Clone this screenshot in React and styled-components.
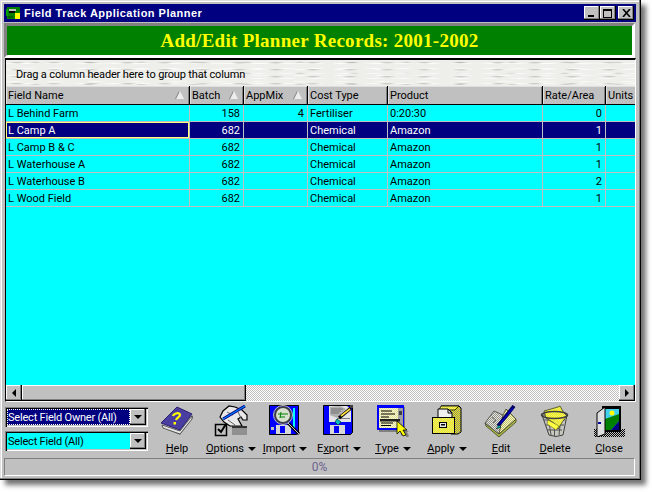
import React from 'react'
import styled, { createGlobalStyle, css } from 'styled-components'

const GlobalStyle = createGlobalStyle`
  html, body {
    margin: 0;
    padding: 0;
    background: #fff;
  }
  body {
    font-family: Roboto, "Liberation Sans", Arial, sans-serif;
    font-size: 11px;
    color: #000;
  }
`

const Page = styled.div`
  width: 652px;
  height: 492px;
  overflow: hidden;
`

const Window = styled.div`
  width: 641px;
  height: 480px;
  box-sizing: border-box;
  padding: 4px 5px 4px 4px;
  display: flex;
  flex-direction: column;
  background: #c0c0c0;
  box-shadow: inset -1px -1px 0 #000, inset -2px -2px 0 #808080, inset 1px 1px 0 #dfdfdf,
    inset 2px 2px 0 #fff, 5px 5px 5px rgba(0, 0, 0, 0.55);
`

const TitleBar = styled.div`
  height: 18px;
  flex: none;
  display: flex;
  align-items: center;
  padding: 0 2px;
  gap: 3px;
  background: #000080;
  color: #fff;
`

const TitleText = styled.span`
  font-family: "Liberation Sans", Arial, sans-serif;
  font-weight: bold;
  font-size: 11px;
  letter-spacing: 0.48px;
  flex: 1;
`

const WinButtons = styled.div`
  display: flex;
  align-items: center;
`

const WinButton = styled.div`
  width: 16px;
  height: 14px;
  box-sizing: border-box;
  margin-left: ${(p) => (p.$gap ? '2px' : '0')};
  background: #c0c0c0;
  box-shadow: inset -1px -1px 0 #000, inset -2px -2px 0 #808080, inset 1px 1px 0 #fff;
  display: flex;
  align-items: center;
  justify-content: center;
`

const Banner = styled.div`
  height: 35px;
  flex: none;
  box-sizing: border-box;
  margin-top: 1px;
  margin-right: 1px;
  border: 3px solid;
  border-color: #808080 #fff #fff #808080;
  background: #008000;
  color: #ffff00;
  font-family: "Liberation Serif", "Times New Roman", serif;
  font-weight: bold;
  font-size: 19px;
  letter-spacing: 0.28px;
  display: flex;
  align-items: center;
  justify-content: center;
`

const Grid = styled.div`
  flex: 1;
  min-height: 0;
  display: flex;
  flex-direction: column;
  box-sizing: border-box;
  border-top: 2px solid #000;
  border-left: 1px solid #000;
  border-right: 1px solid #fff;
  border-bottom: 1px solid #fff;
  margin-left: 1px;
`

const GroupPanel = styled.div`
  height: 26px;
  flex: none;
  padding: 2px 0 0 10px;
  box-sizing: border-box;
  display: flex;
  align-items: center;
  letter-spacing: -0.15px;
  background-color: #eeeeea;
  background-image: radial-gradient(ellipse 9px 0.9px at 30% 40%, rgba(140, 140, 135, 0.55), transparent),
    radial-gradient(ellipse 12px 0.9px at 70% 70%, rgba(255, 255, 255, 0.8), transparent),
    radial-gradient(ellipse 7px 0.8px at 55% 20%, rgba(150, 150, 145, 0.5), transparent),
    radial-gradient(ellipse 14px 1px at 15% 60%, rgba(255, 255, 255, 0.7), transparent);
  background-size: 37px 7px, 29px 5px, 53px 11px, 41px 6px;
`

const columns = '184px 54px 64px 80px 155px 63px 1fr'

const HeaderRow = styled.div`
  display: grid;
  grid-template-columns: ${columns};
  height: 18px;
  flex: none;
  border-bottom: 1px solid #000;
  background: #c0c0c0;
`

const HeaderCell = styled.div`
  display: flex;
  align-items: center;
  justify-content: space-between;
  box-sizing: border-box;
  padding: 0 4px 0 2px;
  border-right: 1px solid #000;
  box-shadow: inset 1px 1px 0 #dfdfdf, inset -1px 0 0 #808080;
  white-space: nowrap;
  overflow: hidden;
  &:last-child {
    border-right: 0;
    box-shadow: inset 1px 1px 0 #dfdfdf;
  }
`

const SortArrow = styled.span`
  width: 0;
  height: 0;
  margin-right: 1px;
  border-left: 4px solid transparent;
  border-right: 4px solid transparent;
  border-bottom: 8px solid #ececec;
  filter: drop-shadow(-1px 0 0 #808080);
`

const Body = styled.div`
  flex: 1;
  min-height: 0;
  background: #00ffff;
  overflow: hidden;
`

const Row = styled.div`
  display: grid;
  grid-template-columns: ${columns};
  height: 17px;
  box-sizing: border-box;
  border-bottom: 1px solid #c0c0c0;
  ${(p) =>
    p.$selected &&
    css`
      background: #000080;
      color: #fff;
    `}
`

const Cell = styled.div`
  box-sizing: border-box;
  padding: 1px 3px 0 2px;
  line-height: 15px;
  white-space: nowrap;
  overflow: hidden;
  text-align: ${(p) => (p.$num ? 'right' : 'left')};
  border-right: 1px solid #c0c0c0;
  ${(p) =>
    p.$focus &&
    css`
      box-shadow: inset 0 0 0 1px #ffff80;
    `}
  &:last-child {
    border-right: 0;
  }
`

const ScrollBar = styled.div`
  height: 16px;
  flex: none;
  display: flex;
  background-color: #fff;
  background-image: conic-gradient(#c0c0c0 25%, #fff 0 50%, #c0c0c0 0 75%, #fff 0);
  background-size: 2px 2px;
`

const ScrollButton = styled.div`
  width: ${(p) => p.$w || '16px'};
  flex: none;
  box-sizing: border-box;
  background: #c0c0c0;
  box-shadow: inset -1px -1px 0 #000, inset -2px -2px 0 #808080, inset 1px 1px 0 #fff;
  display: flex;
  align-items: center;
  justify-content: center;
`

const ScrollGap = styled.div`
  flex: 1;
`

const Arrow = styled.span`
  width: 0;
  height: 0;
  border-top: 4px solid transparent;
  border-bottom: 4px solid transparent;
  ${(p) =>
    p.$dir === 'left'
      ? 'border-right: 4px solid #000;'
      : 'border-left: 4px solid #000;'}
`

const BottomBar = styled.div`
  height: 56px;
  flex: none;
  display: flex;
`

const Combos = styled.div`
  width: 146px;
  flex: none;
  padding: 5px 0 0 1px;
  box-sizing: border-box;
  display: flex;
  flex-direction: column;
  gap: 4px;
`

const Combo = styled.div`
  height: 20px;
  width: 143px;
  box-sizing: border-box;
  padding: 2px;
  display: flex;
  box-shadow: inset 1px 1px 0 #808080, inset 2px 2px 0 #000, inset -1px -1px 0 #fff, inset -2px -2px 0 #c0c0c0;
`

const ComboField = styled.div`
  flex: 1;
  min-width: 0;
  line-height: 17px;
  padding-left: 1px;
  white-space: nowrap;
  overflow: hidden;
  letter-spacing: -0.2px;
  background: ${(p) => (p.$active ? '#000080' : '#00ffff')};
  color: ${(p) => (p.$active ? '#fff' : '#000')};
  ${(p) =>
    p.$active &&
    css`
      outline: 1px dotted #fff;
      outline-offset: -1px;
    `}
`

const ComboButton = styled.div`
  width: 16px;
  flex: none;
  background: #c0c0c0;
  box-shadow: inset -1px -1px 0 #000, inset -2px -2px 0 #808080, inset 1px 1px 0 #fff;
  display: flex;
  align-items: center;
  justify-content: center;
`

const DownArrow = styled.span`
  width: 0;
  height: 0;
  margin-left: ${(p) => p.$ml || '0'};
  border-left: 4px solid transparent;
  border-right: 4px solid transparent;
  border-top: 4px solid #000;
`

const Toolbar = styled.div`
  display: flex;
  padding-top: 3px;
`

const Tool = styled.div`
  width: 54px;
  flex: none;
  display: flex;
  flex-direction: column;
  align-items: center;
`

const ToolLabel = styled.div`
  margin-top: 5px;
  line-height: 14px;
  font-size: 11px;
  white-space: nowrap;
  display: flex;
  align-items: center;
  u {
    text-underline-offset: 1px;
  }
`

const StatusBar = styled.div`
  height: 18px;
  flex: none;
  margin-right: 1px;
  box-sizing: border-box;
  border: 1px solid;
  border-color: #808080 #fff #fff #808080;
  display: flex;
  align-items: center;
  justify-content: center;
  color: #6b6390;
  font-size: 12px;
`

const AppIcon = () => (
  <svg width="15" height="14" viewBox="0 0 15 14" shapeRendering="crispEdges">
    <rect x="1" y="1" width="13" height="12" fill="#008000" />
    <rect x="0" y="3" width="2" height="7" fill="#00a000" />
    <rect x="3" y="3" width="7" height="2" fill="#c0c0c0" />
    <rect x="3" y="5" width="6" height="2" fill="#000" />
    <rect x="9" y="7" width="5" height="6" fill="#ffff00" />
    <rect x="2" y="10" width="5" height="2" fill="#006000" />
  </svg>
)

const Dither = ({ id, a, b }) => (
  <pattern id={id} width="2" height="2" patternUnits="userSpaceOnUse">
    <rect width="2" height="2" fill={a} />
    <rect width="1" height="1" fill={b} />
    <rect x="1" y="1" width="1" height="1" fill={b} />
  </pattern>
)

const Icon = ({ children }) => (
  <svg width="36" height="32" viewBox="0 0 36 32">
    {children}
  </svg>
)

const HelpIcon = () => (
  <Icon>
    <path d="M4 23l17 7 13-17v-3L21 27 3 20z" fill="#808080" />
    <path d="M3 20l18 6 12-15v3L21 29 4 23z" fill="#e8e8e8" stroke="#404040" strokeWidth="0.8" />
    <path d="M2 18L18 2l15 7-12 16z" fill="#4a3fa0" stroke="#2a2070" strokeWidth="1" />
    <path d="M14 11c1-3 7-4 7-1 0 2-3 2-4 5" fill="none" stroke="#ffff00" strokeWidth="2.2" />
    <rect x="14.5" y="17" width="2.5" height="2.5" fill="#ffff00" />
  </Icon>
)

const OptionsIcon = () => (
  <Icon>
    <path d="M19 22h15v8H19z" fill="#909090" />
    <path d="M7 12l3-6 6-5 6 1 7 3 5 5v5h-4l-2-3-3 2 4 7H17l-6-4z" fill="#e8e8e8" stroke="#000" strokeWidth="1.200" />
    <path d="M14 7l6 3M15 15l7 5M25 7l3 6" stroke="#606060" strokeWidth="1" fill="none" />
    <path d="M10 14L32 1" stroke="#000080" strokeWidth="3" />
    <path d="M10 14L32 1" stroke="#0080ff" strokeWidth="1.2" />
    <rect x="2.500" y="19.500" width="11" height="11" fill="#c0c0c0" stroke="#000" strokeWidth="1.5" />
    <path d="M5 24l3 3 5-8" fill="none" stroke="#000" strokeWidth="2" />
    <rect x="19" y="21" width="15" height="2" fill="#303030" />
  </Icon>
)

const Floppy = ({ children }) => (
  <>
    <path d="M2.500 0.500h29v27l-2 2h-27z" fill="#0000ff" stroke="#000" strokeWidth="1" />
    <rect x="9" y="20" width="15" height="9" fill="#d8d8d8" />
    <rect x="13" y="21" width="5" height="7" fill="#0000ff" />
    {children}
  </>
)

const ImportIcon = () => (
  <Icon>
    <Floppy>
      <rect x="4" y="22" width="3" height="3" fill="#c0c0c0" />
      <rect x="26" y="3" width="2" height="20" fill="#00ffff" />
      <path d="M21 18l11 11" stroke="#000" strokeWidth="3" />
      <path d="M21 18l11 11" stroke="#c0c0c0" strokeWidth="1" />
      <circle cx="16" cy="10" r="8" fill="#d8e0d0" stroke="#404040" strokeWidth="2" />
      <circle cx="16" cy="10" r="9.500" fill="none" stroke="#c0c0c0" strokeWidth="1" />
      <path d="M11 9h10M13 12h5M14 7l-1 6" stroke="#008000" strokeWidth="1" fill="none" />
    </Floppy>
  </Icon>
)

const ExportIcon = () => (
  <Icon>
    <Floppy>
      <path d="M8 1h18l4 3v13H8z" fill="#e4e4e4" />
      <path d="M9 2l10-1 6 3-9 9-7-3z" fill="#b0b0b0" />
      <path d="M10 4h12M10 6h10M10 8h8" stroke="#707070" strokeWidth="1" />
      <rect x="16" y="13" width="13" height="1" fill="#808080" />
      <path d="M16 14l4 3-3 3-3-3z" fill="#00c0c0" stroke="#004040" strokeWidth="0.8" />
      <path d="M18 13l12-10" stroke="#000" strokeWidth="3.400" />
      <path d="M20 11l9-7" stroke="#ffe040" strokeWidth="1.600" />
      <rect x="29" y="0" width="3" height="3" fill="#404040" />
    </Floppy>
  </Icon>
)

const TypeIcon = () => (
  <Icon>
    <defs>
      <Dither id="typeDither" a="#ffffc0" b="#d8d8a8" />
    </defs>
    <rect x="4" y="2" width="26" height="25" fill="#808080" />
    <rect x="2" y="0" width="27" height="25" fill="#0000ff" />
    <rect x="4" y="3" width="19" height="20" fill="url(#typeDither)" />
    <rect x="23" y="3" width="5" height="20" fill="#a0a0a0" />
    <rect x="24" y="6" width="3" height="4" fill="#404040" />
    <path d="M6 6h11M6 9h14M6 12h8M6 18h12M6 20.500h10" stroke="#000" strokeWidth="1" />
    <rect x="5" y="14" width="20" height="2.500" fill="#202020" />
    <path d="M25 20l9 7h-2l2 4-2 2-3-5-3 3z" fill="#404040" opacity="0.5" />
    <path d="M22 16l10 9-4 0 3 5-3 1-3-5-3 3z" fill="#ffff00" stroke="#000" strokeWidth="0.8" />
  </Icon>
)

const ApplyIcon = () => (
  <Icon>
    <defs>
      <Dither id="applyFront" a="#ffff00" b="#d8d890" />
      <Dither id="applySide" a="#ffff00" b="#808080" />
    </defs>
    <path d="M12 1h18l2 2v24l-3 2H22V13z" fill="url(#applySide)" stroke="#000" strokeWidth="1" />
    <path d="M12 1l-2 4h16l4-4z" fill="url(#applyFront)" stroke="#000" strokeWidth="0.8" />
    <path d="M9 4h10l4 4v10H9z" fill="#f0f0f0" stroke="#000" strokeWidth="1" />
    <path d="M19 4v4h4" fill="none" stroke="#000" strokeWidth="1" />
    <rect x="3.500" y="12.500" width="22" height="16" fill="url(#applyFront)" stroke="#000" strokeWidth="1" />
    <rect x="10.500" y="17.500" width="7" height="5" fill="#e8e8e8" stroke="#000" strokeWidth="1" />
    <rect x="12" y="19" width="4" height="1.500" fill="#000" />
  </Icon>
)

const EditIcon = () => (
  <Icon>
    <defs>
      <Dither id="editLeft" a="#e8e8e0" b="#909088" />
      <Dither id="editRight" a="#ffffb0" b="#b8b880" />
    </defs>
    <path d="M2 18l14 11 17-15v3L16 32 3 21z" fill="#a8b848" stroke="#404020" strokeWidth="0.8" />
    <path d="M2 18L11 6l9 4 3 12-7 7z" fill="url(#editLeft)" stroke="#404040" strokeWidth="0.8" />
    <path d="M20 10l3-6 10 10-17 15z" fill="url(#editRight)" stroke="#404020" strokeWidth="0.8" />
    <path d="M9 12l4 3-3 3" fill="none" stroke="#707070" strokeWidth="1" />
    <path d="M15 21L31 1" stroke="#000060" strokeWidth="3.600" />
    <path d="M17 19L30 3" stroke="#0000c0" strokeWidth="1.400" />
    <path d="M13 24l3-4 2 2z" fill="#00c0c0" stroke="#000" strokeWidth="0.5" />
  </Icon>
)

const DeleteIcon = () => (
  <Icon>
    <defs>
      <Dither id="delPaper" a="#ffff00" b="#e0e080" />
    </defs>
    <path d="M5 10h25l-4 20q-7 3-14 0z" fill="#c8c8c0" stroke="#404040" strokeWidth="1" />
    <path d="M7 15h21M9 20h18M10 25h15M11 11l3 19M17.500 11v20M24 11l-2 19" stroke="#505050" strokeWidth="1" fill="none" />
    <path d="M7 6l14-4 2-1 4 7 3 3-4 5-5 8-4-6-8-5z" fill="url(#delPaper)" stroke="#404020" strokeWidth="0.8" />
    <path d="M11 15l11 6-3 4-9-6z" fill="#ffff40" stroke="#606030" strokeWidth="0.6" />
    <ellipse cx="17.500" cy="10" rx="13" ry="3.500" fill="none" stroke="#404040" strokeWidth="1.500" />
  </Icon>
)

const CloseIcon = () => (
  <Icon>
    <defs>
      <Dither id="floor" a="#000" b="#c0c0c0" />
    </defs>
    <rect x="3" y="24" width="31" height="8" fill="url(#floor)" />
    <rect x="11.500" y="1.500" width="18" height="25" fill="#000" stroke="#000" />
    <rect x="14" y="4" width="14" height="21" fill="#40d0f0" />
    <circle cx="21" cy="8" r="2.500" fill="#ffff00" />
    <path d="M14 14l14-5v7l-8 9h-6z" fill="#008000" />
    <path d="M20 25l8-9v9z" fill="#000080" />
    <path d="M6 8l8-6v27l-8 3z" fill="#e0e0e0" stroke="#000" strokeWidth="1" />
    <rect x="7" y="17" width="3" height="2" fill="#0000a0" />
  </Icon>
)

const columnsData = [
  { name: 'Field Name', sort: true },
  { name: 'Batch', sort: true },
  { name: 'AppMix', sort: true },
  { name: 'Cost Type' },
  { name: 'Product' },
  { name: 'Rate/Area' },
  { name: 'Units' },
]

const rows = [
  ['L Behind Farm', '158', '4', 'Fertiliser', '0:20:30', '0'],
  ['L Camp A', '682', '', 'Chemical', 'Amazon', '1'],
  ['L Camp B & C', '682', '', 'Chemical', 'Amazon', '1'],
  ['L Waterhouse A', '682', '', 'Chemical', 'Amazon', '1'],
  ['L Waterhouse B', '682', '', 'Chemical', 'Amazon', '2'],
  ['L Wood Field', '682', '', 'Chemical', 'Amazon', '1'],
]

const tools = [
  { icon: HelpIcon, key: 'H', rest: 'elp' },
  { icon: OptionsIcon, key: 'O', rest: 'ptions', menu: true },
  { icon: ImportIcon, key: 'I', rest: 'mport', menu: true },
  { icon: ExportIcon, pre: 'E', key: 'x', rest: 'port', menu: true },
  { icon: TypeIcon, key: 'T', rest: 'ype', menu: true },
  { icon: ApplyIcon, key: 'A', rest: 'pply', menu: true },
  { icon: EditIcon, key: 'E', rest: 'dit' },
  { icon: DeleteIcon, key: 'D', rest: 'elete' },
  { icon: CloseIcon, key: 'C', rest: 'lose' },
]

export default function App() {
  return (
    <Page>
      <GlobalStyle />
      <Window>
        <TitleBar>
          <AppIcon />
          <TitleText>Field Track Application Planner</TitleText>
          <WinButtons>
            <WinButton>
              <svg width="8" height="8" viewBox="0 0 8 8" shapeRendering="crispEdges">
                <rect x="0" y="6" width="6" height="2" fill="#000" />
              </svg>
            </WinButton>
            <WinButton>
              <svg width="10" height="9" viewBox="0 0 10 9" shapeRendering="crispEdges">
                <path d="M0.500 1.500h8v7h-8z" fill="none" stroke="#000" />
                <rect x="0" y="0" width="9" height="2" fill="#000" />
              </svg>
            </WinButton>
            <WinButton $gap>
              <svg width="9" height="8" viewBox="0 0 9 8">
                <path d="M1 0l7 8M8 0l-7 8" stroke="#000" strokeWidth="1.600" />
              </svg>
            </WinButton>
          </WinButtons>
        </TitleBar>
        <Banner>Add/Edit Planner Records: 2001-2002</Banner>
        <Grid>
          <GroupPanel>Drag a column header here to group that column</GroupPanel>
          <HeaderRow>
            {columnsData.map((col) => (
              <HeaderCell key={col.name}>
                {col.name}
                {col.sort && <SortArrow />}
              </HeaderCell>
            ))}
          </HeaderRow>
          <Body>
            {rows.map((row, i) => (
              <Row key={row[0]} $selected={i === 1}>
                <Cell $focus={i === 1}>{row[0]}</Cell>
                <Cell $num>{row[1]}</Cell>
                <Cell $num>{row[2]}</Cell>
                <Cell>{row[3]}</Cell>
                <Cell>{row[4]}</Cell>
                <Cell $num>{row[5]}</Cell>
                <Cell />
              </Row>
            ))}
          </Body>
          <ScrollBar>
            <ScrollButton>
              <Arrow $dir="left" />
            </ScrollButton>
            <ScrollButton $w="224px" />
            <ScrollGap />
            <ScrollButton>
              <Arrow $dir="right" />
            </ScrollButton>
          </ScrollBar>
        </Grid>
        <BottomBar>
          <Combos>
            <Combo>
              <ComboField $active>Select Field Owner (All)</ComboField>
              <ComboButton>
                <DownArrow />
              </ComboButton>
            </Combo>
            <Combo>
              <ComboField>Select Field (All)</ComboField>
              <ComboButton>
                <DownArrow />
              </ComboButton>
            </Combo>
          </Combos>
          <Toolbar>
            {tools.map((tool) => {
              const ToolIcon = tool.icon
              return (
                <Tool key={tool.pre ? tool.pre + tool.key : tool.key + tool.rest}>
                  <ToolIcon />
                  <ToolLabel>
                    {tool.pre}
                    <u>{tool.key}</u>
                    {tool.rest}
                    {tool.menu && <DownArrow $ml="4px" />}
                  </ToolLabel>
                </Tool>
              )
            })}
          </Toolbar>
        </BottomBar>
        <StatusBar>0%</StatusBar>
      </Window>
    </Page>
  )
}
